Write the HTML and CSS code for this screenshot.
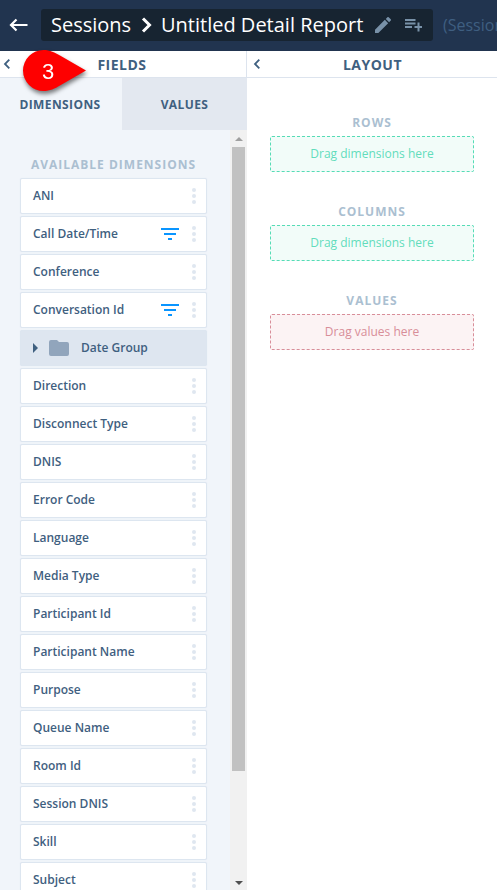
FILE: index.html
```
<!DOCTYPE html>
<html lang="en">
<head>
  <meta charset="UTF-8">
  <meta name="viewport" content="width=device-width, initial-scale=1.0">
  <title>Untitled Detail Report</title>
  <link rel="stylesheet" href="styles.css">
</head>
<body>
  <header class="topbar">
    <svg class="back" width="20" height="14" viewBox="0 0 20 14"><path d="M18.500 7H2M7.500 1.500L2 7l5.500 5.500" fill="none" stroke="#fff" stroke-width="2.200"/></svg>
    <div class="breadcrumb">
      <span class="crumb">Sessions</span>
      <svg class="sep" width="12" height="16" viewBox="0 0 12 16"><path d="M2 1.500L8.500 8L2 14.500" fill="none" stroke="#fff" stroke-width="3"/></svg>
      <span class="crumb report-name">Untitled Detail Report</span>
      <svg class="edit" width="16" height="16" viewBox="3 3 18 18"><path fill="#7891a8" d="M3 17.250V21h3.750L17.810 9.940l-3.750-3.750L3 17.250zM20.710 7.040a1 1 0 0 0 0-1.410l-2.340-2.340a1 1 0 0 0-1.410 0l-1.830 1.830 3.750 3.750 1.830-1.830z"/></svg>
      <svg class="add" width="17" height="13" viewBox="0 0 17 13"><path fill="#7891a8" d="M0 0h10.500v2H0zM0 3.500h10.500v2H0zM0 7h7v2H0zM12.500 3.500h2V7H17v2h-2.500v3.500h-2V9H9.500V7h3z"/></svg>
    </div>
    <span class="subject">(Sessions)</span>
  </header>

  <main class="panels">
    <section class="panel fields">
      <div class="panel-header">
        <svg class="collapse" width="8" height="10" viewBox="0 0 8 10"><path d="M6.300 0.700L2 5l4.300 4.300" fill="none" stroke="#3f6080" stroke-width="1.800"/></svg>
        <h2>FIELDS</h2>
      </div>
      <div class="tabs">
        <div class="tab active">DIMENSIONS</div>
        <div class="tab">VALUES</div>
      </div>
      <div class="list-area">
        <div class="list">
          <h3>AVAILABLE DIMENSIONS</h3>
          <div class="item"><span>ANI</span><i class="dots"></i></div>
          <div class="item"><span>Call Date/Time</span><svg class="filter" width="18" height="12" viewBox="0 0 18 12"><path fill="#0a95ff" d="M0 0h18v2H0zM3 5h12v2H3zM7 10h4v2H7z"/></svg><i class="dots"></i></div>
          <div class="item"><span>Conference</span><i class="dots"></i></div>
          <div class="item"><span>Conversation Id</span><svg class="filter" width="18" height="12" viewBox="0 0 18 12"><path fill="#0a95ff" d="M0 0h18v2H0zM3 5h12v2H3zM7 10h4v2H7z"/></svg><i class="dots"></i></div>
          <div class="item group">
            <svg width="5" height="10" viewBox="0 0 5 10"><path fill="#3f6080" d="M0 0l5 5-5 5z"/></svg>
            <svg class="folder" width="20" height="16" viewBox="0 0 20 16"><path fill="#91a5bc" d="M2 0h6l2 2h8a2 2 0 0 1 2 2v10a2 2 0 0 1-2 2H2a2 2 0 0 1-2-2V2a2 2 0 0 1 2-2z"/></svg>
            <span>Date Group</span>
          </div>
          <div class="item"><span>Direction</span><i class="dots"></i></div>
          <div class="item"><span>Disconnect Type</span><i class="dots"></i></div>
          <div class="item"><span>DNIS</span><i class="dots"></i></div>
          <div class="item"><span>Error Code</span><i class="dots"></i></div>
          <div class="item"><span>Language</span><i class="dots"></i></div>
          <div class="item"><span>Media Type</span><i class="dots"></i></div>
          <div class="item"><span>Participant Id</span><i class="dots"></i></div>
          <div class="item"><span>Participant Name</span><i class="dots"></i></div>
          <div class="item"><span>Purpose</span><i class="dots"></i></div>
          <div class="item"><span>Queue Name</span><i class="dots"></i></div>
          <div class="item"><span>Room Id</span><i class="dots"></i></div>
          <div class="item"><span>Session DNIS</span><i class="dots"></i></div>
          <div class="item"><span>Skill</span><i class="dots"></i></div>
          <div class="item"><span>Subject</span><i class="dots"></i></div>
        </div>
        <div class="scrollbar">
          <svg width="8" height="4" viewBox="0 0 8 4"><path fill="#a0a0a0" d="M0 4l4-4 4 4z"/></svg>
          <div class="thumb"></div>
          <svg class="down" width="8" height="4" viewBox="0 0 8 4"><path fill="#505050" d="M0 0l4 4 4-4z"/></svg>
        </div>
      </div>
    </section>

    <section class="panel layout">
      <div class="panel-header">
        <svg class="collapse" width="8" height="10" viewBox="0 0 8 10"><path d="M6.300 0.700L2 5l4.300 4.300" fill="none" stroke="#3f6080" stroke-width="1.800"/></svg>
        <h2>LAYOUT</h2>
      </div>
      <div class="zones">
        <h3>ROWS</h3>
        <div class="drop">Drag dimensions here</div>
        <h3>COLUMNS</h3>
        <div class="drop">Drag dimensions here</div>
        <h3>VALUES</h3>
        <div class="drop drop-values">Drag values here</div>
      </div>
    </section>
  </main>

  <!-- step marker -->
  <div class="marker">
    <svg width="64" height="42" viewBox="0 0 64 42"><path fill="#fe0000" d="M20.500 0C27 0 32 2.500 37 5.500L63 20.500L37 35.500C32 38.500 27 41 20.500 41A20.500 20.500 0 0 1 20.500 0z"/></svg>
    <span>3</span>
  </div>
</body>
</html>
```

FILE: styles.css
```
* {
  box-sizing: border-box;
}

body {
  margin: 0;
  height: 100vh;
  overflow: hidden;
  display: flex;
  flex-direction: column;
  font-family: "Open Sans", "Noto Sans", sans-serif;
  color: #3f6080;
  background: #fff;
}

svg {
  display: block;
  flex: none;
}

h2, h3 {
  margin: 0;
}

/* top bar */
.topbar {
  display: flex;
  align-items: center;
  flex: none;
  height: 51px;
  padding: 0 0 1px 9px;
  background: #21344f;
  white-space: nowrap;
  overflow: hidden;
}

.breadcrumb {
  display: flex;
  align-items: center;
  flex: none;
  width: 392px;
  height: 32px;
  margin-left: 12px;
  padding-left: 10px;
  border-radius: 3px;
  background: #172431;
}

.crumb {
  flex: none;
  width: 80px;
  font-size: 20px;
  line-height: 32px;
  color: #fff;
}

.report-name {
  width: 202px;
}

.sep {
  margin: 0 8px 0 10px;
}

.edit {
  margin-left: 12px;
}

.add {
  margin-left: 14px;
}

.subject {
  margin-left: 10px;
  font-size: 16px;
  color: #3f5f81;
}

/* panels */
.panels {
  display: flex;
  flex: 1;
  min-height: 0;
}

.panel {
  display: flex;
  flex-direction: column;
  min-height: 0;
}

.fields {
  width: 247px;
}

.layout {
  flex: 1;
}

.panel-header {
  display: flex;
  align-items: center;
  flex: none;
  height: 27px;
  padding: 0 13px 0 3px;
  border-bottom: 1px solid #dde4ee;
}

.fields .panel-header {
  padding-right: 13px;
  border-right: 1px solid #dde4ee;
}

.layout .panel-header {
  padding-left: 6px;
}

.panel-header h2 {
  flex: 1;
  padding-top: 2px;
  font-size: 14px;
  font-weight: 700;
  line-height: 24px;
  letter-spacing: 0.5px;
  text-align: center;
}

.tabs {
  display: flex;
  flex: none;
  height: 52px;
}

.tab {
  flex: 1;
  font-size: 12px;
  font-weight: 700;
  line-height: 53px;
  letter-spacing: 0.4px;
  text-align: center;
  background: #e3e8f0;
}

.tab.active {
  flex: none;
  width: 122px;
  padding-right: 2px;
  background: #f1f5fa;
}

h3 {
  font-size: 12px;
  font-weight: 700;
  line-height: 16px;
  letter-spacing: 1px;
  text-align: center;
  color: #abbfd1;
}

/* dimension list */
.list-area {
  display: flex;
  flex: 1;
  min-height: 0;
  background: #f1f5fa;
}

.list {
  display: flex;
  flex-direction: column;
  gap: 2px;
  width: 230px;
  padding: 27px 23px 0 20px;
  overflow: hidden;
}

.list h3 {
  margin-bottom: 3px;
  white-space: nowrap;
}

.item {
  display: flex;
  align-items: center;
  flex: none;
  height: 36px;
  padding: 0 10px 0 12px;
  border: 1px solid #dde6f0;
  border-radius: 2px;
  background: #fff;
  box-shadow: 0 0 1px #dde6f0;
  font-size: 12px;
  font-weight: 600;
}

.item span {
  flex: 1;
  padding-bottom: 1px;
}

.filter {
  margin-right: 13px;
}

.dots {
  width: 4px;
  height: 4px;
  border-radius: 50%;
  background: #dfe7f0;
  box-shadow: 0 -6px #dfe7f0, 0 6px #dfe7f0;
}

.group {
  background: #dee6f0;
}

.folder {
  margin: 0 12px 0 11px;
}

.scrollbar {
  display: flex;
  flex-direction: column;
  align-items: center;
  width: 17px;
  padding: 7px 0 5px;
  background: #f1f1f1;
}

.thumb {
  width: 13px;
  height: 624px;
  margin-top: 6px;
  background: #c1c1c1;
}

.down {
  margin-top: auto;
}

/* drop zones */
.zones {
  padding: 37px 23px 0;
}

.drop {
  height: 36px;
  margin: 5px 0 32px;
  border: 1px dashed #56dcb6;
  border-radius: 2px;
  background: #f2fcf9;
  color: #62dcbc;
  font-size: 12px;
  line-height: 34px;
  text-align: center;
}

.drop-values {
  border-color: #d88e99;
  background: #fcf3f4;
  color: #d88e99;
}

/* callout sits over the fields header */
.marker {
  position: absolute;
  top: 50px;
  left: 23px;
  filter: drop-shadow(1px 3px 2px rgba(0, 0, 0, 0.5));
}

.marker span {
  position: absolute;
  top: 0;
  left: 19px;
  font-family: "Liberation Sans", Arial, sans-serif;
  font-size: 22px;
  line-height: 43px;
  color: #fff;
}
```
